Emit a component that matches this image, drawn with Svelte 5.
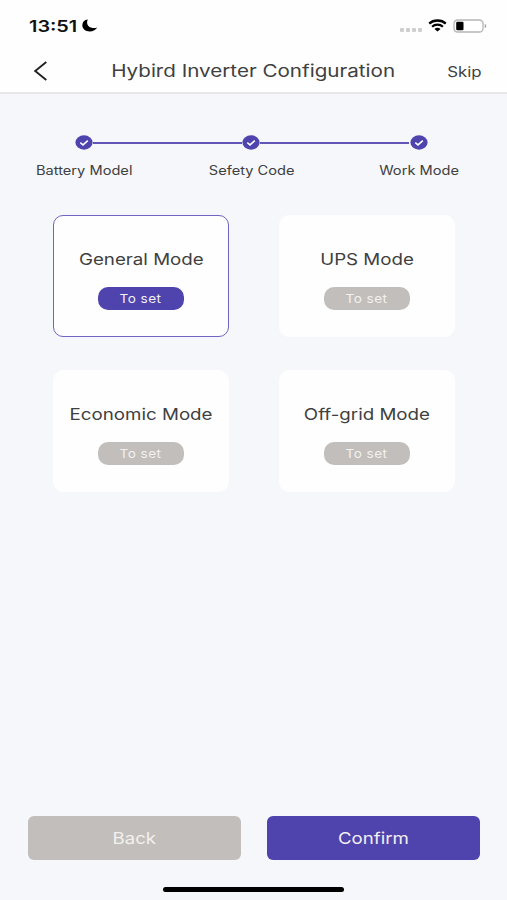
<script lang="ts">
  let steps = ["Battery Model", "Sefety Code", "Work Mode"];
  let modes = ["General Mode", "UPS Mode", "Economic Mode", "Off-grid Mode"];
  let selected = $state(0);
</script>

<div class="screen">
  <header>
    <div class="status">
      <span class="time"><span class="wide">13:51</span></span>
      <svg class="moon" width="16" height="13" viewBox="0 0 16 13">
        <path d="M5.800 0.500A6.200 6 0 0 0 0.300 6.300C0.300 10 3.600 12.500 7.600 12.500c3.500 0 6.500-1.500 7.600-3.900-1 .4-2 .5-3.200.5C7.900 9.100 5.100 6.900 5.100 3.600c0-1.200.2-2.200.7-3.100z" fill="#000" />
      </svg>
      <div class="signal"><i></i><i></i><i></i><i></i></div>
      <svg class="wifi" width="19" height="13" viewBox="0 0 19 13">
        <path d="M1.200 4.600C3.300 2.600 6.200 1.500 9.500 1.500s6.200 1.100 8.300 3.100" fill="none" stroke="#000" stroke-width="2.300" />
        <path d="M4.100 7.700C5.500 6.300 7.400 5.600 9.500 5.600s4 .7 5.400 2.100" fill="none" stroke="#000" stroke-width="2.200" />
        <path d="M6.500 9.900c.8-.7 1.800-1.100 3-1.100s2.200.4 3 1.100l-3 2.700z" fill="#000" />
      </svg>
      <svg class="battery" width="34" height="14" viewBox="0 0 34 14">
        <rect x="1" y="1" width="29" height="12" rx="3.600" fill="#fff" stroke="#b5b5b5" stroke-width="1.300" />
        <rect x="3.200" y="2.800" width="7.300" height="8.400" rx="1.300" fill="#000" />
        <path d="M31.700 5c1.200.4 1.600 1.100 1.600 2s-.4 1.600-1.600 2z" fill="#a9a9a9" />
      </svg>
    </div>
    <div class="nav">
      <svg class="back-icon" width="16" height="22" viewBox="0 0 16 22">
        <path d="M13.300 2L2.200 11l11.100 9" fill="none" stroke="#222" stroke-width="1.900" />
      </svg>
      <h1><span class="wide">Hybird Inverter Configuration</span></h1>
      <span class="skip"><span class="wide">Skip</span></span>
    </div>
  </header>

  <div class="steps">
    {#each steps as step}
      <div class="step">
        <svg width="18" height="15" viewBox="0 0 18 15">
          <ellipse cx="9" cy="7.500" rx="8.600" ry="7.200" fill="#4f43ae" />
          <path d="M5.300 7.700l2.700 2.200 4.800-4.300" fill="none" stroke="#fff" stroke-width="1.500" />
        </svg>
        <span class="wide">{step}</span>
      </div>
    {/each}
  </div>

  <div class="modes">
    {#each modes as mode, i}
      <div class="card" class:active={selected === i}>
        <h2><span class="wide">{mode}</span></h2>
        <button onclick={() => (selected = i)}><span class="wide">To set</span></button>
      </div>
    {/each}
  </div>

  <footer>
    <div class="actions">
      <button><span class="wide">Back</span></button>
      <button class="confirm"><span class="wide">Confirm</span></button>
    </div>
    <div class="home"></div>
  </footer>
</div>

<style>
  :global(body) {
    background: #f5f7fb;
  }

  .screen {
    width: 507px;
    height: 900px;
    display: flex;
    flex-direction: column;
    overflow: hidden;
    background: #f5f7fb;
    color: #404040;
    font-family: Inter, "Liberation Sans", sans-serif;
  }

  .wide {
    display: inline-block;
    white-space: nowrap;
    transform: scaleX(1.17);
  }

  header {
    height: 92px;
    background: #fefefe;
    border-bottom: 2px solid #e7e7ea;
  }

  .status {
    height: 51px;
    display: flex;
    align-items: center;
    padding: 0 20px 0 29px;
  }

  .time {
    width: 53px;
    color: #111;
    font-size: 16px;
    font-weight: 600;
  }

  .time .wide {
    transform: scaleX(1.24);
    transform-origin: left;
  }

  .signal {
    display: flex;
    gap: 2px;
    margin: 8px 6px 0 auto;
  }

  .signal i {
    width: 4px;
    height: 4px;
    border-radius: 1px;
    background: #cfcfcf;
  }

  .wifi {
    margin-right: 6px;
  }

  .nav {
    height: 41px;
    display: grid;
    grid-template-columns: 80px 1fr 80px;
    align-items: center;
    box-sizing: border-box;
    padding-bottom: 1px;
  }

  .back-icon {
    margin-left: 33px;
  }

  h1,
  h2 {
    margin: 0;
    text-align: center;
    font-size: 17px;
    line-height: 22px;
    font-weight: 400;
  }

  h1 .wide {
    transform: scaleX(1.212);
  }

  h2 {
    font-size: 16px;
  }

  .skip {
    justify-self: end;
    margin-right: 28px;
    font-size: 14px;
  }

  .skip .wide {
    transform: scaleX(1.2);
  }

  .steps {
    display: flex;
    padding: 41px 0 0 0.5px;
    height: 80px;
  }

  .step {
    flex: 0 0 167.3px;
    display: flex;
    flex-direction: column;
    align-items: center;
    gap: 12px;
    position: relative;
    font-size: 12.500px;
    line-height: 17px;
  }

  .step + .step::before {
    content: "";
    position: absolute;
    right: 93px;
    top: 6.500px;
    width: 149px;
    height: 2px;
    background: #6156b8;
  }

  .modes {
    display: grid;
    grid-template-columns: 176px 176px;
    grid-auto-rows: 122px;
    gap: 33px 50px;
    padding-left: 53px;
  }

  .card {
    display: flex;
    flex-direction: column;
    align-items: center;
    box-sizing: border-box;
    padding-top: 32px;
    border: 1px solid #fefefe;
    border-radius: 10px;
    background: #fefefe;
  }

  .card.active {
    border-color: #6f64c0;
  }

  button {
    border: none;
    padding: 0;
    background: #c2bebb;
    color: #f2f1ef;
    font-family: inherit;
    cursor: pointer;
  }

  .card button {
    width: 86px;
    height: 23px;
    margin-top: 17px;
    border-radius: 10px;
    font-size: 12px;
    letter-spacing: 0.4px;
  }

  .card button .wide {
    transform: scaleX(1.13);
  }

  .active button,
  .confirm {
    background: #4f43ae;
  }

  footer {
    margin-top: auto;
  }

  .actions {
    display: grid;
    grid-template-columns: 213px 213px;
    gap: 26px;
    justify-content: center;
  }

  .actions button {
    height: 44px;
    border-radius: 6px;
    font-size: 16.500px;
  }

  .actions .wide {
    transform: scaleX(1.13);
  }

  .home {
    width: 181px;
    height: 5px;
    margin: 27px auto 8px;
    border-radius: 3px;
    background: #000;
  }
</style>
